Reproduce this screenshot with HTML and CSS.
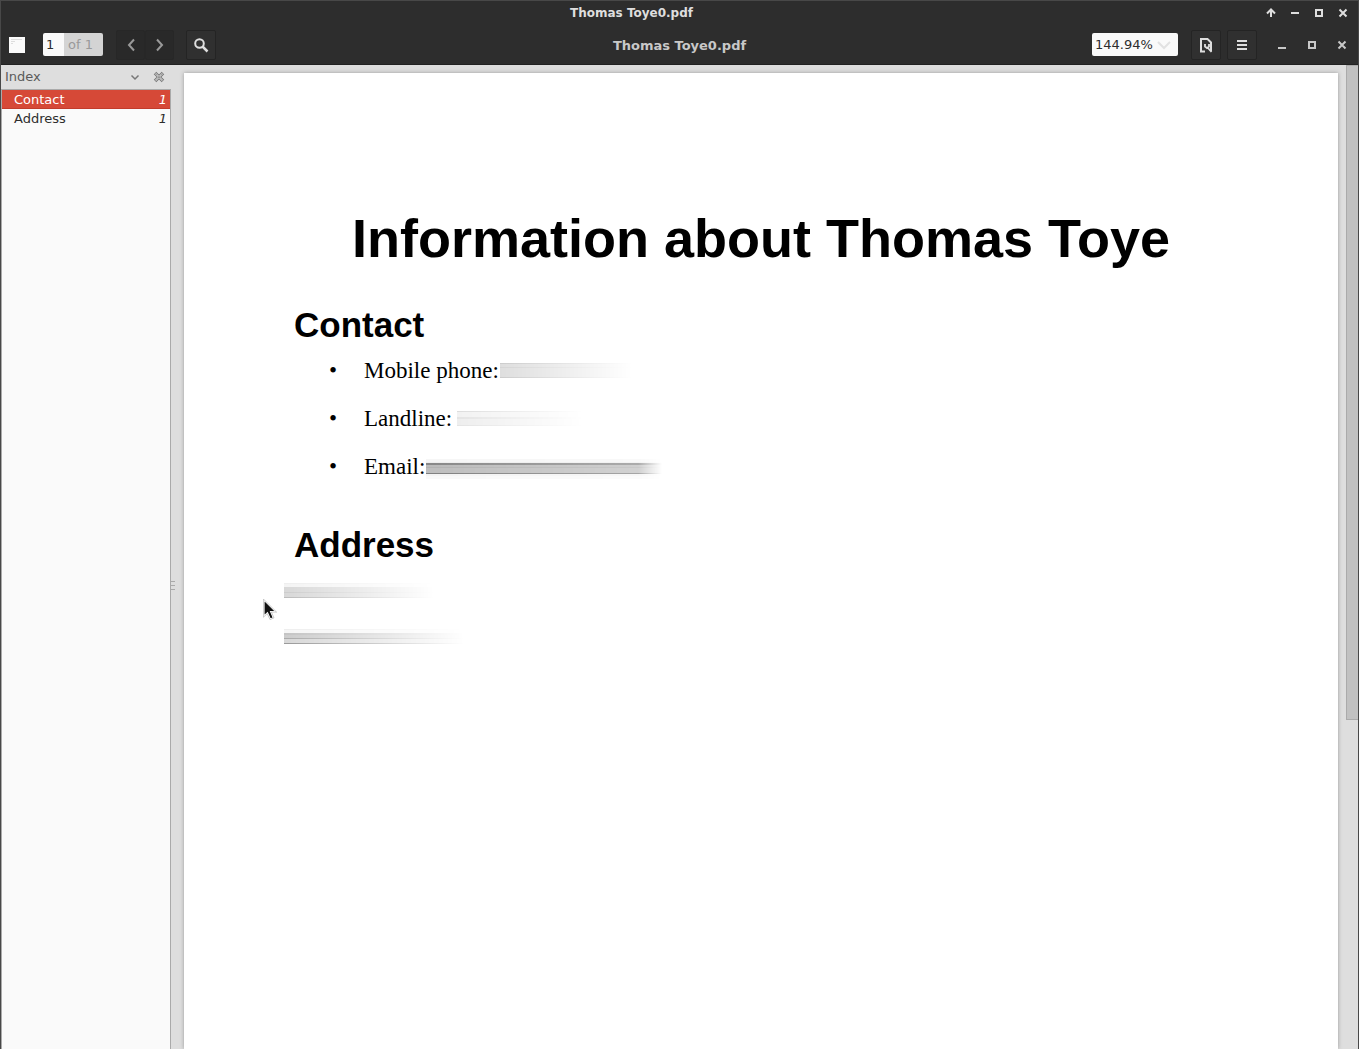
FILE: index.html
```html
<!DOCTYPE html>
<html lang="en">
<head>
<meta charset="utf-8">
<title>Thomas Toye0.pdf</title>
<link rel="stylesheet" href="styles.css">
</head>
<body>
<div class="window">
  <header class="titlebar">
    <div class="titlebar-title">Thomas Toye0.pdf</div>
    <div class="titlebar-buttons">
      <button aria-label="Roll up"><svg viewBox="0 0 12 12"><path d="M6 2v8M2 6.500L6 2.500l4 4" /></svg></button>
      <button aria-label="Minimize window"><svg viewBox="0 0 12 12"><path d="M2 6h8" /></svg></button>
      <button aria-label="Maximize window"><svg viewBox="0 0 12 12"><path d="M3 3h6v6H3z" /></svg></button>
      <button aria-label="Close window"><svg viewBox="0 0 12 12"><path d="M2.500 2.500l7 7M9.500 2.500l-7 7" /></svg></button>
    </div>
  </header>

  <div class="toolbar">
    <div class="tools">
      <button class="pane-toggle" aria-label="Side pane"><svg viewBox="0 0 16 16"><path d="M0 0h16v16H0z" fill="#fafafa"/><path d="M2 2.500h11M2 4.500h4M2 6.500h2" stroke="#ddd" fill="none"/></svg></button>
      <div class="page-entry">
        <input id="page" class="page-input" value="1" aria-label="Page"><label class="page-total" for="page">of 1</label>
      </div>
      <div class="nav-group">
        <button class="tool nav" aria-label="Previous page"><svg viewBox="0 0 16 16"><path d="M11 2.500L6 8l5 5.500"/></svg></button>
        <button class="tool nav" aria-label="Next page"><svg viewBox="0 0 16 16"><path d="M5 2.500L10 8l-5 5.500"/></svg></button>
      </div>
      <button class="tool" aria-label="Find"><svg viewBox="0 0 16 16"><circle cx="6.500" cy="6.500" r="4.300"/><path d="M9.500 9.500l5 5" stroke-width="2.500"/></svg></button>
    </div>
    <div class="toolbar-title">Thomas Toye0.pdf</div>
    <div class="tools tools-end">
      <div class="zoom">
        <select class="zoom-select" aria-label="Zoom"><option>144.94%</option></select>
        <svg class="zoom-arrow" viewBox="0 0 16 16"><path d="M2 5l6 6 6-6"/></svg>
      </div>
      <div class="tool-pair">
        <button class="tool" aria-label="Document options"><svg viewBox="0 0 16 16"><path d="M7 14.500H3V2h6.500L13 5.500V14" stroke-width="2"/><path d="M7 7v2.500l2 1.500 2-1.500V7M9.500 10.500l4 4.500" stroke-width="1.800"/></svg></button>
        <button class="tool" aria-label="Menu"><svg viewBox="0 0 16 16"><path d="M3 4h10M3 8h10M3 12h10"/></svg></button>
      </div>
      <div class="app-buttons">
        <button aria-label="Minimize"><svg viewBox="0 0 12 12"><path d="M2 9h8"/></svg></button>
        <button aria-label="Maximize"><svg viewBox="0 0 12 12"><path d="M3 3h6v6H3z"/></svg></button>
        <button aria-label="Close"><svg viewBox="0 0 12 12"><path d="M2.500 2.500l7 7M9.500 2.500l-7 7"/></svg></button>
      </div>
    </div>
  </div>

  <div class="content">
    <aside class="sidebar">
      <div class="sidebar-head">
        <span class="sidebar-title">Index</span>
        <button class="sidebar-button" aria-label="Choose pane"><svg viewBox="0 0 12 12"><path d="M2.500 4.500L6 8l3.500-3.500" stroke="#777" stroke-width="1.500" fill="none"/></svg></button>
        <button class="sidebar-button" aria-label="Close pane"><svg viewBox="0 0 12 12"><path d="M2 2l8 8M10 2l-8 8" stroke="#777" stroke-width="3.500" fill="none"/><path d="M2 2l8 8M10 2l-8 8" stroke="#ddd" stroke-width="1.600" fill="none"/><path d="M2 2l8 8M10 2l-8 8" stroke="#777" stroke-width="1" stroke-dasharray="1 1" fill="none"/></svg></button>
      </div>
      <nav class="outline">
        <a class="outline-row selected" href="#contact"><span>Contact</span><i>1</i></a>
        <a class="outline-row" href="#address"><span>Address</span><i>1</i></a>
      </nav>
    </aside>
    <div class="splitter"><span></span><span></span><span></span></div>
    <main class="viewer">
      <article class="page">
        <h1>Information about Thomas Toye</h1>
        <h2 id="contact">Contact</h2>
        <ul>
          <li>Mobile phone:<span class="smear phone"></span></li>
          <li>Landline:<span class="smear landline"></span></li>
          <li>Email:<span class="smear email"></span></li>
        </ul>
        <h2 id="address">Address</h2>
        <div class="address-lines">
          <span class="smear street"></span>
          <span class="smear city"></span>
        </div>
        <svg class="pointer" viewBox="0 0 14 21"><path d="M1 1v16l3.500-3.300L7.300 20l3-1.300L7.600 12.500h5z" fill="#111" stroke="#fff" stroke-width="1.200"/><path d="M.4 0v18.200l3.800-3.600 2.800 6 4-1.700-2.600-5.800h5.200z" fill="none" stroke="#999" stroke-width=".5"/></svg>
      </article>
    </main>
    <div class="scrollbar"><div class="thumb"></div></div>
  </div>
</div>
</body>
</html>
```
FILE: styles.css
```css
*,
*::before {
  box-sizing: border-box;
}

body {
  margin: 0;
  font: 13px/19px "DejaVu Sans", sans-serif;
  color: #2d2d2d;
}

button {
  padding: 0;
  border: 0;
  background: none;
  display: flex;
  align-items: center;
  justify-content: center;
}

.window {
  display: flex;
  flex-direction: column;
  height: 100vh;
  border: 1px solid #484848;
  border-bottom: 0;
  overflow: hidden;
  background: #dedede;
}

/* Window manager title bar */
.titlebar {
  flex: none;
  display: flex;
  align-items: center;
  height: 25px;
  background: #2d2d2d;
  color: #dedede;
}
.titlebar-title {
  flex: 1;
  padding-right: 3px;
  text-align: center;
  font-size: 12px;
  font-weight: bold;
}
.titlebar-buttons {
  display: flex;
  gap: 12px;
  padding: 0 9px 2px 0;
}
.titlebar-buttons svg,
.app-buttons svg {
  width: 12px;
  height: 12px;
  fill: none;
  stroke: #dedede;
  stroke-width: 2;
}

/* Application header bar */
.toolbar {
  flex: none;
  display: grid;
  grid-template-columns: 1fr auto 1fr;
  align-items: center;
  height: 39px;
  border-bottom: 1px solid #222;
  background: #2d2d2d;
  color: #c8c8c8;
}
.toolbar-title {
  font-weight: bold;
}
.tools {
  display: flex;
  align-items: center;
  gap: 12px;
  padding-left: 8px;
}
.tools-end {
  justify-content: flex-end;
  padding: 0 10px 0 0;
}
.pane-toggle {
  width: 16px;
  height: 16px;
  margin-right: 6px;
}
.page-entry {
  display: flex;
  height: 23px;
  margin-bottom: 2px;
  border-radius: 2px;
  overflow: hidden;
}
.page-input {
  width: 21px;
  padding: 0 0 0 3px;
  border: 0;
  font: inherit;
  color: #2d2d2d;
  background: #fafafa;
}
.page-total {
  width: 39px;
  padding: 2px 4px;
  background: #d4d4d4;
  color: #999;
}
.nav-group {
  display: flex;
  margin-left: 1px;
}
.tool {
  width: 30px;
  height: 30px;
  border: 1px solid #242424;
  border-radius: 2px;
  background: #303030;
}
.tool svg {
  width: 16px;
  height: 16px;
  fill: none;
  stroke: #dedede;
  stroke-width: 2;
}
.nav {
  width: 29px;
  border-color: #272727;
  background: #292929;
}
.nav svg { stroke: #999; }
.zoom {
  position: relative;
  width: 86px;
  height: 23px;
  margin: 0 1px 2px 0;
}
.zoom-select {
  width: 100%;
  height: 100%;
  padding: 0 3px;
  border: 0;
  border-radius: 2px;
  appearance: none;
  font: inherit;
  color: #2d2d2d;
  background: #fafafa;
}
.zoom-arrow {
  position: absolute;
  top: 4px;
  right: 6px;
  width: 16px;
  height: 16px;
  fill: none;
  stroke: #e2e2e2;
  stroke-width: 2;
  pointer-events: none;
}
.tool-pair {
  display: flex;
  gap: 6px;
}
.app-buttons {
  display: flex;
  gap: 18px;
  padding-left: 7px;
}
.app-buttons svg { stroke: #c8c8c8; }

/* Side pane */
.content {
  flex: 1;
  display: flex;
  min-height: 0;
}
.sidebar {
  flex: none;
  display: flex;
  flex-direction: column;
  width: 170px;
}
.sidebar-head {
  display: flex;
  align-items: center;
  gap: 12px;
  height: 24px;
  padding: 0 6px 0 4px;
}
.sidebar-title {
  flex: 1;
  padding-bottom: 2px;
  color: #5a5a5a;
}
.sidebar-button svg {
  width: 12px;
  height: 12px;
}
.outline {
  flex: 1;
  border: 1px solid #aaa;
  border-bottom: 0;
  background: #fafafa;
}
.outline-row {
  display: flex;
  justify-content: space-between;
  padding: 0 3px 0 12px;
  color: #2d2d2d;
  text-decoration: none;
}
.selected {
  color: #fff;
  background: #d64937;
  box-shadow: inset 0 -1px #c23c2b;
}
.splitter {
  flex: none;
  display: flex;
  flex-direction: column;
  justify-content: center;
  gap: 3px;
  width: 13px;
  padding-top: 56px;
}
.splitter span {
  width: 4px;
  height: 1px;
  background: #aaa;
}

/* Document */
.viewer {
  flex: 1;
  display: flex;
  min-width: 0;
  padding: 8px 8px 0 0;
}
.page {
  position: relative;
  flex: 1;
  padding: 136px 110px 0;
  background: #fff;
  box-shadow: 0 0 4px #999;
  color: #000;
}
h1, h2 {
  margin: 0;
  font-family: "Liberation Sans", sans-serif;
  font-weight: bold;
}
h1 {
  margin: 0 -30px;
  padding-bottom: 2px;
  text-align: center;
  font-size: 54px;
  line-height: 58px;
}
h2 {
  margin-top: 36px;
  font-size: 35px;
  line-height: 40px;
}
ul {
  margin: 0;
  padding: 2px 0 0;
  list-style: none;
  font: 23px/48px "Liberation Serif", serif;
}
ul + h2 { margin-top: 34px; }
li {
  display: flex;
  align-items: center;
}
li::before {
  content: "•";
  flex: none;
  width: 70px;
  padding-left: 35px;
}
.smear {
  height: 15px;
  -webkit-mask-image: linear-gradient(90deg, #000, transparent);
  mask-image: linear-gradient(90deg, #000, transparent);
}
li .smear { margin: 0 0 2px 1px; }
.phone {
  width: 132px;
  background: linear-gradient(#ccc 1px, #dedede 1px 4px, #d4d4d4 4px 5px, #dedede 5px 14px, #ccc 14px);
}
li .landline {
  width: 126px;
  margin-left: 5px;
  background: linear-gradient(#ddd 1px, #f2f2f2 1px 6px, #e4e4e4 6px 8px, #eee 8px 14px, #e4e4e4 14px);
}
.email {
  width: 236px;
  height: 25px;
  background: linear-gradient(transparent 5px, #f6f6f6 5px 8px, #eee 8px 9px, #888 9px 11px, #bbb 11px 13px, #b2b2b2 13px 14px, #bebebe 14px 19px, #808080 19px 20px, #f4f4f4 20px 22px, #f9f9f9 22px);
  -webkit-mask-image: linear-gradient(90deg, #000, rgba(0, 0, 0, .7) 90%, transparent);
  mask-image: linear-gradient(90deg, #000, rgba(0, 0, 0, .7) 90%, transparent);
}
.address-lines {
  display: flex;
  flex-direction: column;
  gap: 31px;
  margin: 18px 0 0 -10px;
}
.street {
  width: 150px;
  background: linear-gradient(#eee 1px, #f4f4f4 1px 4px, #d8d8d8 4px 9px, #ccc 9px 10px, #d8d8d8 10px 14px, #bbb 14px);
}
.city {
  width: 180px;
  background: linear-gradient(#eee 1px, #f6f6f6 1px 4px, #c4c4c4 4px 6px, #ccc 6px 9px, #aaa 9px 10px, #d8d8d8 10px 14px, #999 14px);
}
.pointer {
  position: absolute;
  left: 79px;
  top: 526px;
  width: 14px;
  height: 21px;
}

.scrollbar {
  flex: none;
  width: 12px;
}
.thumb {
  height: 67%;
  max-height: 655px;
  border: 1px solid #aaa;
  border-right: 0;
  background: #c1c1c1;
}
```
